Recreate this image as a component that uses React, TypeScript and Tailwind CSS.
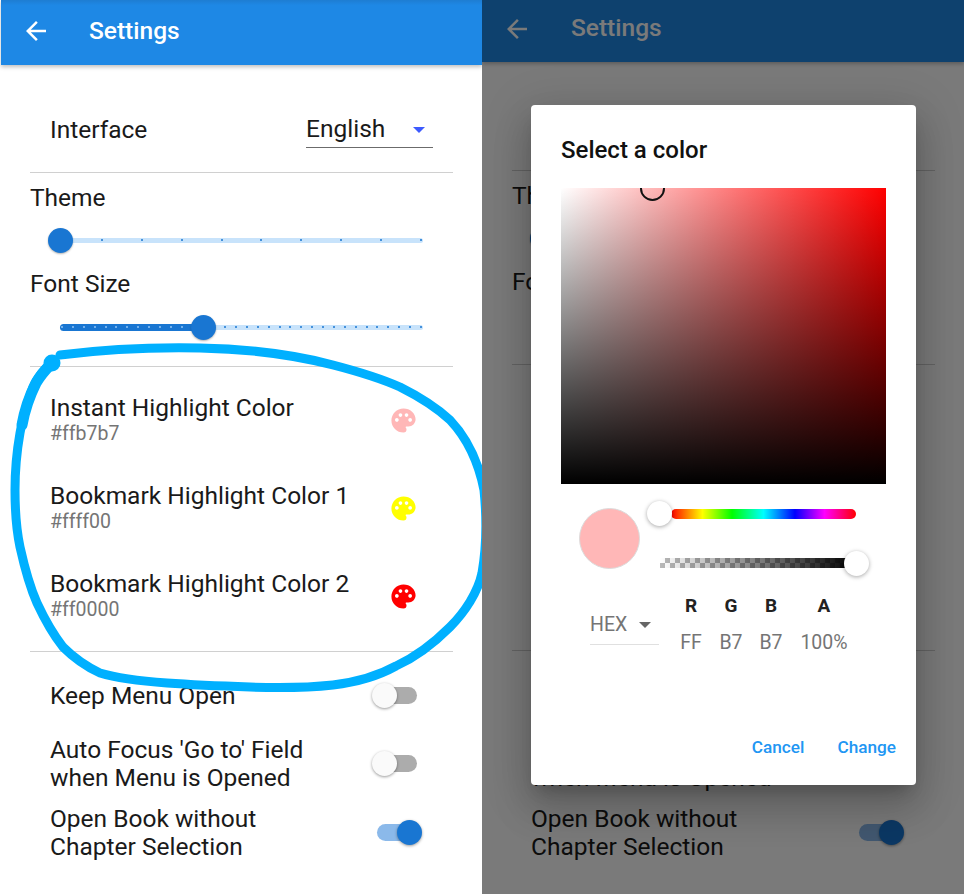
// App.tsx
import { MdArrowBack, MdPalette } from 'react-icons/md'

const colors = [
  { title: 'Instant Highlight Color', value: '#ffb7b7', icon: 'text-[#ffb7b7]' },
  { title: 'Bookmark Highlight Color 1', value: '#ffff00', icon: 'text-[#ffff00]' },
  { title: 'Bookmark Highlight Color 2', value: '#ff0000', icon: 'text-[#ff0000]' },
]

const channels = [
  { label: 'R', value: 'FF', width: 'w-[40px]' },
  { label: 'G', value: 'B7', width: 'w-[40px]' },
  { label: 'B', value: 'B7', width: 'w-[40px]' },
  { label: 'A', value: '100%', width: 'w-[66px]' },
]

function Divider() {
  return <div className="h-px bg-[#d0d0d0]" />
}

function Slider({ dots, value }: { dots: number; value: number }) {
  return (
    <div className="relative ml-[30px] h-[5px] w-[363px] rounded-full bg-[#c8e3fb]">
      <div className="absolute left-0 top-[-1px] h-[7px] rounded-full bg-[#1976d2]" style={{ width: value }} />
      <div className="absolute inset-x-[1px] top-[1.5px] flex justify-between">
        {Array.from({ length: dots }).map((_, i) => (
          <span key={i} className={`h-[2px] w-[2px] rounded-full ${i * 10.87 < value ? 'bg-[#90c4f5]' : 'bg-[#1976d2]'}`} />
        ))}
      </div>
      <div
        className="absolute top-[-10px] h-[25px] w-[25px] rounded-full bg-[#1976d2] shadow-[0_1px_2px_rgba(0,0,0,0.3)]"
        style={{ left: value - 12.5 }}
      />
    </div>
  )
}

function Toggle({ on }: { on?: boolean }) {
  return (
    <div className="relative mb-[2px] mr-[31px] flex h-[25px] w-[50px] items-center">
      {on ? (
        <>
          <div className="ml-[5px] h-[17px] w-[43px] rounded-full bg-[#8bb9ea]" />
          <div className="absolute right-0 top-0 h-[25px] w-[25px] rounded-full bg-[#1976d2] shadow-[0_1px_3px_rgba(0,0,0,0.4)]" />
        </>
      ) : (
        <>
          <div className="ml-px h-[17px] w-[44px] rounded-full bg-[#acacac]" />
          <div className="absolute left-0 top-0 h-[25px] w-[25px] rounded-full bg-[#fafafa] shadow-[0_1px_3px_rgba(0,0,0,0.4)]" />
        </>
      )}
    </div>
  )
}

function SettingsScreen({ dim }: { dim?: boolean }) {
  return (
    <div className="text-[24.5px] text-[#1a1a1a]">
      <header
        className={`flex items-center text-white shadow-[0_2px_4px_rgba(0,0,0,0.25)] ${
          dim
            ? 'h-[62px] bg-[#1e88e5] pb-[5px] pl-[20px]'
            : 'ml-px h-[65px] bg-[linear-gradient(to_bottom,#1e7dd2,#1e88e5_8%)] pb-[3px] pl-[20px]'
        }`}
      >
        <MdArrowBack size={30} />
        <span className={`text-[24.5px] font-medium ${dim ? 'ml-[39px]' : 'ml-[38px]'}`}>Settings</span>
      </header>

      <div className="pl-[30px] pr-[29px]">
        <div className={`flex items-center justify-between pl-[20px] pr-[20px] pt-[23px] ${dim ? 'h-[108px]' : 'h-[107px]'}`}>
          <span>Interface</span>
          <div className="relative flex h-[36px] w-[127px] items-center justify-between border-b border-[#6b6b6b]">
            <span>English</span>
            <span className="mr-[8px] h-0 w-0 border-x-[6px] border-t-[6px] border-x-transparent border-t-[#3d5afe]" />
          </div>
        </div>
        <Divider />

        <div className="flex h-[48px] items-center pt-[2px]">Theme</div>
        <div className="flex h-[38px] items-center">
          <Slider dots={10} value={0} />
        </div>
        <div className="flex h-[48px] items-center pt-[2px]">Font Size</div>
        <div className="flex h-[40px] items-center">
          <Slider dots={34} value={143} />
        </div>
        <div className="h-[19px]" />
        <Divider />

        <div className={`pt-[8px] ${dim ? 'pb-[13px]' : 'pb-[12px]'}`}>
          {colors.map(c => (
            <div key={c.title} className="flex h-[88px] items-center justify-between pl-[20px] pr-[35px]">
              <div>
                <div className="leading-[28px]">{c.title}</div>
                <div className="pt-px text-[19.5px] leading-[22px] text-[#757575]">{c.value}</div>
              </div>
              <MdPalette size={29} className={`mt-[2px] ${c.icon}`} />
            </div>
          ))}
        </div>
        <Divider />

        <div className={dim ? 'mt-[21px] pl-[19px]' : 'mt-[20px] pl-[20px]'}>
          <div className="flex h-[48px] items-center justify-between">
            <span>Keep Menu Open</span>
            <Toggle />
          </div>
          <div className="mt-[16px] flex h-[56px] items-center justify-between leading-[28px]">
            <span>
              Auto Focus 'Go to' Field
              <br />
              when Menu is Opened
            </span>
            <Toggle />
          </div>
          <div className="mt-[13px] flex h-[56px] items-center justify-between leading-[28px]">
            <span>
              Open Book without
              <br />
              Chapter Selection
            </span>
            <Toggle on />
          </div>
        </div>
      </div>
    </div>
  )
}

function ColorDialog() {
  return (
    <div className="absolute left-[49px] top-[105px] h-[680px] w-[385px] rounded-[4px] bg-white shadow-[0_11px_15px_-7px_rgba(0,0,0,0.2),0_24px_38px_3px_rgba(0,0,0,0.14),0_9px_46px_8px_rgba(0,0,0,0.12)]">
      <div className="flex h-[83px] items-end pb-[23px] pl-[30px] text-[24px] font-medium leading-[30px] text-[#111]">
        Select a color
      </div>

      <div className="relative ml-[30px] h-[296px] w-[325px] overflow-hidden bg-[linear-gradient(to_right,#fff,#f00)]">
        <div className="absolute inset-0 bg-[linear-gradient(to_bottom,transparent,#000)]" />
        <div className="absolute left-[79px] top-[-12px] h-[25px] w-[25px] rounded-full border-2 border-[#111]" />
      </div>

      <div className="ml-[48px] mt-[24px] flex">
        <div className="h-[61px] w-[61px] rounded-full border border-[#dcdcdc] bg-[#ffb7b7]" />
        <div className="relative ml-[20px] h-[61px] w-[196px]">
          <div className="ml-[11px] mt-[1px] h-[10px] w-[185px] rounded-full bg-[linear-gradient(to_right,#f00_0%,#ff0_17%,#0f0_33%,#0ff_50%,#00f_67%,#f0f_83%,#f00_100%)]" />
          <div className="relative mt-[39px] h-[10px] w-[196px] bg-[repeating-conic-gradient(#b8b8b8_0_25%,#fff_0_50%)] bg-[length:10px_10px]">
            <div className="absolute inset-0 bg-[linear-gradient(to_right,transparent,#000)]" />
          </div>
          <div className="absolute left-[-13px] top-[-7px] h-[25px] w-[25px] rounded-full bg-white shadow-[0_1px_4px_rgba(0,0,0,0.35)]" />
          <div className="absolute right-[-13px] top-[43px] h-[25px] w-[25px] rounded-full bg-white shadow-[0_1px_4px_rgba(0,0,0,0.35)]" />
        </div>
      </div>

      <div className="ml-[59px] mt-[25px] flex">
        <div className="mt-[14px] flex h-[37px] w-[69px] items-center justify-between border-b border-[#e0e0e0] pb-[3px] text-[19.5px] text-[#757575]">
          <span>HEX</span>
          <span className="mr-[8px] h-0 w-0 border-x-[6px] border-t-[6px] border-x-transparent border-t-[#666]" />
        </div>
        <div className="ml-[12px] flex">
          {channels.map(ch => (
            <div key={ch.label} className={`${ch.width} text-center`}>
              <div className="text-[19px] font-bold leading-[24px] text-[#222]">{ch.label}</div>
              <div className="mt-[13px] text-[19.5px] leading-[24px] text-[#757575]">{ch.value}</div>
            </div>
          ))}
        </div>
      </div>

      <div className="absolute bottom-[26px] right-[20px] flex gap-[33px] text-[17.2px] font-medium leading-[24px] text-[#2196f3]">
        <span>Cancel</span>
        <span>Change</span>
      </div>
    </div>
  )
}

export default function App() {
  return (
    <div className="flex h-[894px] w-[964px] overflow-hidden bg-white font-['Roboto',sans-serif]">
      <div className="relative h-full w-[482px] overflow-hidden">
        <SettingsScreen />
        {/* hand drawn marker round the colour rows */}
        <svg className="absolute inset-0" width="482" height="894" fill="none" stroke="#00b0ff" strokeLinecap="round" strokeLinejoin="round">
          <path
            strokeWidth="9"
            d="M60 355C100 350 150 347 200 348C250 349 295 355 333 365C360 372 382 379 400 387C420 397 437 408 450 420C467 438 478 460 484 490C487 520 486 550 482 573C478 592 465 612 450 627C435 642 418 656 396 666C378 676 358 682 333 685C305 688 278 688 250 687C220 686 195 685 167 683C140 681 120 679 100 673C85 666 73 657 63 647C52 633 44 618 37 603C29 585 24 565 20 547C16 528 15 510 15 490C15 470 17 450 20 433C23 415 28 400 33 387C38 376 44 369 52 363"
          />
          <path strokeWidth="11" d="M22 425C25 408 30 395 36 383C40 376 46 369 52 363" />
          <circle cx="52" cy="363" r="8.5" fill="#00b0ff" stroke="none" />
        </svg>
      </div>

      <div className="relative h-full w-[482px] overflow-hidden">
        <SettingsScreen dim />
        <div className="absolute inset-0 bg-black/[0.52]" />
        <ColorDialog />
      </div>
    </div>
  )
}
